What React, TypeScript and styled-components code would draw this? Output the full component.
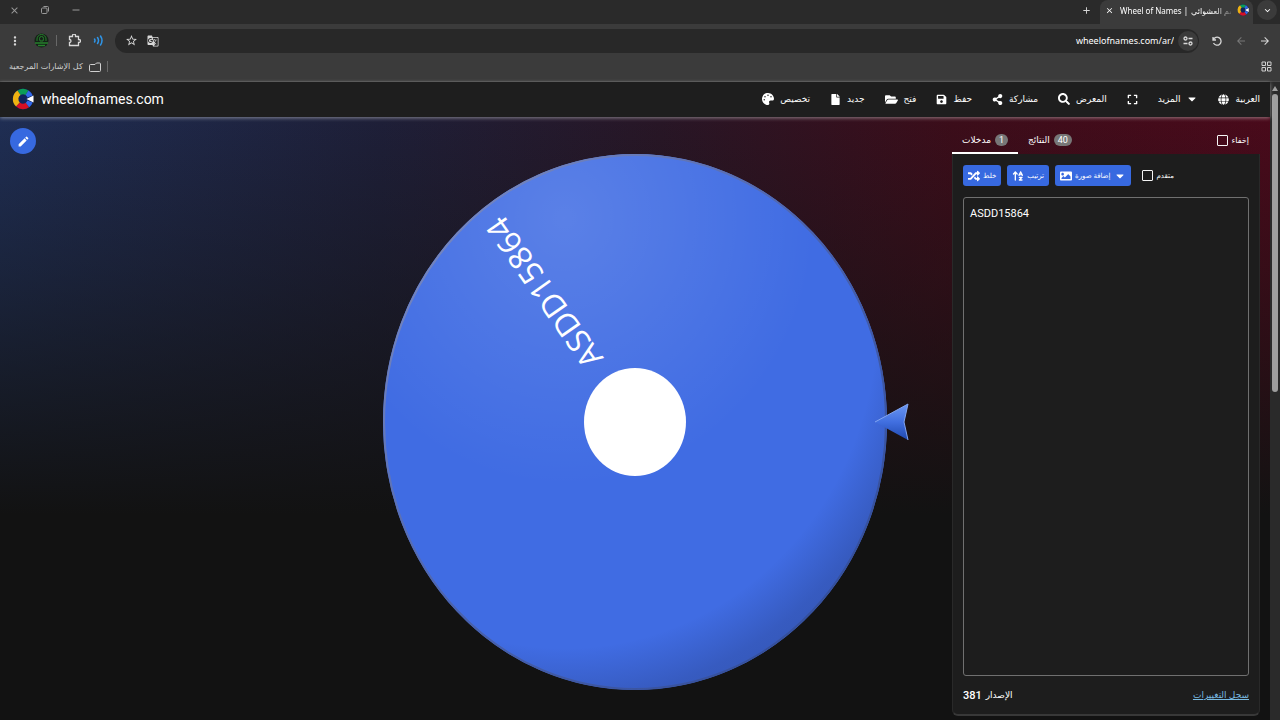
import React from 'react';
import styled, { createGlobalStyle } from 'styled-components';
import {
  FaPalette, FaFile, FaFolderOpen, FaShareAlt, FaSearch, FaSave, FaExpand,
  FaGlobe, FaRandom, FaImage, FaCaretDown,
} from 'react-icons/fa';
import { FaArrowUpAZ } from 'react-icons/fa6';
import {
  MdClose, MdAdd, MdMoreVert, MdStarBorder, MdGTranslate, MdArrowForward,
  MdArrowBack, MdKeyboardArrowDown, MdEdit,
} from 'react-icons/md';

const Global = createGlobalStyle`
  * { box-sizing: border-box; }
  body { margin: 0; background: #121212; color: #fff; font-family: Roboto, "DejaVu Sans", sans-serif; }
  button, input, textarea { font-family: inherit; color: inherit; margin: 0; }
  svg { display: block; flex: none; }
`;

const Window = styled.div`
  min-height: 100vh;
  display: flex;
  flex-direction: column;
`;

const Row = styled.div<{ $gap?: number }>`
  display: flex;
  align-items: center;
  gap: ${p => p.$gap ?? 0}px;
`;

const Spacer = styled.div`
  flex: 1;
`;

const IconButton = styled.button<{ $size?: number; $color?: string; $bg?: string }>`
  display: flex;
  align-items: center;
  justify-content: center;
  flex: none;
  width: ${p => p.$size ?? 20}px;
  height: ${p => p.$size ?? 20}px;
  padding: 0;
  border: 0;
  border-radius: 50%;
  background: ${p => p.$bg ?? 'transparent'};
  color: ${p => p.$color ?? '#d8d8d8'};
`;

const TabStrip = styled.div`
  display: flex;
  align-items: center;
  height: 24px;
  background: #2a2a2a;
  padding: 0 3px 4px 4px;
`;

const WindowButtons = styled(Row)`
  gap: 11px;
`;

const BrowserTab = styled.div`
  display: flex;
  align-items: center;
  align-self: flex-start;
  gap: 6px;
  width: 153px;
  height: 24px;
  margin: 0 4px;
  padding: 0 4px 4px 5px;
  border-radius: 8px 8px 0 0;
  background: #3b3b3b;
  font: 8px "Noto Sans", "DejaVu Sans", sans-serif;
`;

const TabTitle = styled.span`
  flex: 1;
  min-width: 0;
  display: flex;
  gap: 3px;
  align-items: center;
  white-space: nowrap;
  mask-image: linear-gradient(to right, #000 85%, rgba(0, 0, 0, 0.2));
`;

const Toolbar = styled.div`
  display: flex;
  align-items: center;
  gap: 8px;
  height: 33px;
  padding: 0 5px 0 5px;
  background: #3b3b3b;
`;

const AddressBar = styled.div`
  flex: 1;
  display: flex;
  align-items: center;
  gap: 2px;
  height: 24px;
  margin-left: 2px;
  padding: 0 1px 0 6px;
  border-radius: 12px;
  background: #282828;
`;

const AddressInput = styled.input`
  flex: 1;
  min-width: 0;
  border: 0;
  padding: 0 2px;
  outline: 0;
  background: transparent;
  text-align: right;
  font: 9px "Noto Sans", sans-serif;
`;

const Divider = styled.span`
  width: 1px;
  height: 11px;
  background: #686868;
`;

const Bookmarks = styled.div`
  display: flex;
  align-items: center;
  gap: 6px;
  height: 25px;
  padding: 0 8px 5px 9px;
  background: #3b3b3b;
  border-bottom: 1px solid #484848;
  color: #d0d0d0;
  font: 8px "DejaVu Sans", sans-serif;
`;

const Viewport = styled.div`
  flex: 1;
  display: flex;
`;

const Site = styled.div`
  flex: 1;
  min-width: 0;
  display: flex;
  flex-direction: column;
`;

const Header = styled.header`
  display: flex;
  align-items: center;
  height: 35px;
  padding: 0 10px 1px 12px;
  background: #1e1e1e;
  box-shadow: 0 1px 4px rgba(255, 255, 255, 0.45);
  z-index: 1;
`;

const Brand = styled.a`
  display: flex;
  align-items: center;
  gap: 7px;
  color: #fff;
  text-decoration: none;
  font-size: 14px;
`;

const Nav = styled.nav`
  display: flex;
  align-items: center;
  gap: 20px;
`;

const NavButton = styled.button<{ $reverse?: boolean }>`
  display: flex;
  flex-direction: ${p => (p.$reverse ? 'row-reverse' : 'row')};
  align-items: center;
  gap: 6px;
  height: 24px;
  padding: 0;
  border: 0;
  background: transparent;
  font-size: 9px;
  white-space: nowrap;
`;

const Main = styled.main`
  flex: 1;
  display: grid;
  grid-template-columns: minmax(318px, 1fr) minmax(0, 548px) minmax(318px, 1fr);
  background:
    linear-gradient(to bottom, rgba(18, 18, 18, 0) 0%, rgba(18, 18, 18, 0.35) 25%, #121212 66%),
    linear-gradient(to right, #1f2e54 0%, #1e1f38 30%, #281626 52%, #3c0d1a 75%, #4a0a1b 100%);
`;

const EditCell = styled.div`
  padding: 11px 10px;
`;

const EditButton = styled(IconButton)`
  background: #3769e0;
  color: #fff;
`;

const WheelSvg = styled.svg`
  width: 100%;
  height: auto;
  margin-top: 35px;
`;

const Side = styled.section`
  display: flex;
  flex-direction: column;
  justify-self: end;
  width: 308px;
  margin: 10px 10px 4px 0;
`;

const Tabs = styled(Row)`
  height: 27px;
  padding-right: 11px;
`;

const Tab = styled.button<{ $active?: boolean }>`
  display: flex;
  align-items: center;
  gap: 4px;
  height: 27px;
  padding: 0 10px;
  border: 0;
  border-bottom: 2px solid ${p => (p.$active ? '#fff' : 'transparent')};
  background: transparent;
  font-size: 9px;
  white-space: nowrap;
`;

const Badge = styled.span`
  min-width: 12px;
  padding: 0 4px;
  border-radius: 6px;
  background: #777;
  font-size: 9px;
  line-height: 12px;
`;

const Check = styled.label<{ $small?: boolean }>`
  display: flex;
  align-items: center;
  gap: 4px;
  font-size: ${p => (p.$small ? 7 : 8)}px;
  white-space: nowrap;
`;

const Box = styled.input`
  appearance: none;
  width: 11px;
  height: 11px;
  border: 1px solid #f4f4f4;
  border-radius: 1px;
`;

const Card = styled.div`
  flex: 1;
  display: flex;
  flex-direction: column;
  padding: 11px 10px 10px;
  border: 1px solid #292929;
  border-top: 0;
  border-bottom: 2px solid #383838;
  border-radius: 0 0 6px 6px;
  background: #1d1d1d;
`;

const Actions = styled(Row)`
  gap: 6px;
`;

const Action = styled.button`
  display: flex;
  align-items: center;
  gap: 3px;
  height: 21px;
  padding: 0 5px;
  border: 0;
  border-radius: 3px;
  background: #3769e0;
  font-size: 7px;
  white-space: nowrap;
`;

const CheckCell = styled.div`
  margin-left: 5px;
`;

const Entries = styled.textarea`
  flex: 1;
  min-height: 300px;
  width: 100%;
  margin: 11px 0 10px;
  padding: 8px 6px;
  border: 1px solid #707070;
  border-radius: 3px;
  outline: 0;
  resize: none;
  background: #1d1d1d;
  font: 11px/16px Roboto, sans-serif;
`;

const Footer = styled(Row)`
  justify-content: space-between;
  height: 18px;
  font-size: 9px;
`;

const Version = styled.span`
  display: flex;
  align-items: center;
  gap: 4px;
`;

const VersionNumber = styled.b`
  font-size: 11px;
  font-weight: 500;
`;

const ChangeLink = styled.a`
  color: #78b9e0;
`;

const ScrollTrack = styled.div`
  width: 10px;
  display: flex;
  flex-direction: column;
  align-items: center;
  gap: 3px;
  padding-top: 4px;
  background: #2a2a2a;
`;

const ScrollThumb = styled.div`
  width: 6px;
  height: 47%;
  border-radius: 3px;
  background: #9e9e9e;
`;

const Logo = ({ size }: { size: number }) => (
  <svg width={size} height={size} viewBox="0 0 44 44" fill="none">
    <circle cx="22" cy="22" r="21" fill="#10245c" />
    <g strokeWidth="11">
      <path d="M14 9.500A15 15 0 0 1 30 9.500" stroke="#0c9d58" />
      <path d="M30 9.500A15 15 0 0 1 36 17" stroke="#3369e8" />
      <path d="M14 9.500A15 15 0 0 0 12 33" stroke="#eeb211" />
      <path d="M12 33A15 15 0 0 0 31 34" stroke="#d50f25" />
      <path d="M31 34A15 15 0 0 0 36 27" stroke="#3369e8" />
    </g>
    <path d="M43 15V29L29 22Z" fill="#fff" />
  </svg>
);

const Wheel = () => (
  <WheelSvg viewBox="0 0 548 540" role="img" aria-label="ASDD15864">
    <defs>
      <radialGradient id="shine" cx="0.36" cy="0.12" r="0.5">
        <stop offset="0" stopColor="#fff" stopOpacity="0.14" />
        <stop offset="1" stopColor="#fff" stopOpacity="0" />
      </radialGradient>
      <radialGradient id="shade" cx="0.36" cy="0.3" r="0.82">
        <stop offset="0.76" stopColor="#1c2a5c" stopOpacity="0" />
        <stop offset="0.88" stopColor="#1c2a5c" stopOpacity="0.26" />
        <stop offset="1" stopColor="#1c2a5c" stopOpacity="0.36" />
      </radialGradient>
      <linearGradient id="rim" x1="0" y1="0" x2="1" y2="1">
        <stop offset="0" stopColor="#8492c4" />
        <stop offset="0.5" stopColor="#4a62ac" />
        <stop offset="1" stopColor="#2c4896" />
      </linearGradient>
      <linearGradient id="arrow" x1="0" y1="0" x2="0" y2="1">
        <stop offset="0" stopColor="#6c97f2" />
        <stop offset="0.5" stopColor="#416fe0" />
        <stop offset="1" stopColor="#1f48ae" />
      </linearGradient>
    </defs>
    <ellipse cx="274" cy="270" rx="252" ry="268" fill="#406ce3" />
    <ellipse cx="274" cy="270" rx="252" ry="268" fill="url(#shine)" />
    <ellipse cx="274" cy="270" rx="251" ry="267" fill="url(#shade)" stroke="url(#rim)" strokeWidth="2" />
    <text
      transform="translate(243 206) rotate(-125)"
      fill="#fff"
      fontFamily="Open Sans, Noto Sans, sans-serif"
      fontSize="32"
      fontWeight="400"
    >
      ASDD15864
    </text>
    <ellipse cx="274" cy="270" rx="51" ry="54" fill="#fff" />
    <path d="M514 270L547 252L543 270L547 288Z" fill="url(#arrow)" />
    <path d="M514 270L547 252L543 270L547 288" fill="none" stroke="#82a5f2" strokeWidth="1" />
  </WheelSvg>
);

const navItems = [
  { icon: <FaPalette size={12} />, text: 'تخصيص' },
  { icon: <FaFile size={11} />, text: 'جديد' },
  { icon: <FaFolderOpen size={13} />, text: 'فتح' },
  { icon: <FaSave size={11} />, text: 'حفظ' },
  { icon: <FaShareAlt size={11} />, text: 'مشاركة' },
  { icon: <FaSearch size={12} />, text: 'المعرض' },
];

export default function App() {
  return (
    <Window>
      <Global />
      <TabStrip>
        <WindowButtons>
          <IconButton aria-label="إغلاق" $color="#999"><MdClose size={11} /></IconButton>
          <IconButton aria-label="استعادة" $color="#999">
            <svg width="8" height="8" viewBox="0 0 8 8" fill="none" stroke="currentColor">
              <rect x="0.500" y="2" width="5.500" height="5.500" rx="1" />
              <path d="M2.500 0.500H6.500Q7.500 0.500 7.500 1.500V5.500" />
            </svg>
          </IconButton>
          <IconButton aria-label="تصغير" $color="#999">
            <svg width="8" height="8" viewBox="0 0 8 8" stroke="currentColor"><path d="M0.500 4H7.500" /></svg>
          </IconButton>
        </WindowButtons>
        <Spacer />
        <IconButton aria-label="علامة تبويب جديدة"><MdAdd size={11} /></IconButton>
        <BrowserTab>
          <MdClose size={9} />
          <TabTitle>Wheel of Names | <bdi>سم العشوائي</bdi></TabTitle>
          <Logo size={12} />
        </BrowserTab>
        <IconButton $bg="#3b3b3b" $color="#fff" aria-label="بحث"><MdKeyboardArrowDown size={11} /></IconButton>
      </TabStrip>

      <Toolbar>
        <IconButton aria-label="القائمة"><MdMoreVert size={14} /></IconButton>
        <Row $gap={7}>
          <IconButton aria-label="الملف الشخصي" $size={16}>
            <svg width="15" height="15" viewBox="0 0 15 15">
              <circle cx="7.500" cy="7.500" r="7" fill="#142117" />
              <g fill="none" stroke="#26802c">
                <path d="M3 8V6A4.500 4.500 0 0 1 12 6V8" />
                <path d="M5.500 5.500A2 2 0 0 1 9.500 5.500L9 8H6Z" />
                <path d="M1 10H14M4 12.500H11" strokeWidth="1.500" />
              </g>
            </svg>
          </IconButton>
          <Divider />
        </Row>
        <IconButton aria-label="الإضافات" $size={18}>
          <svg width="13" height="13" viewBox="0 0 13 13" fill="none" stroke="currentColor" strokeWidth="1.300">
            <path d="M1.500 2.500H4.500V1.500A1 1 0 0 1 7.500 1.500V2.500H10.500V5.500H11A1 1 0 0 1 11 8.500H10.500V11.500H1.500V8.500A1.500 1.500 0 0 0 1.500 5.500Z" />
          </svg>
        </IconButton>
        <IconButton aria-label="الصوت" $size={14} $color="#2f95e8">
          <svg width="11" height="11" viewBox="0 0 11 11" fill="none" stroke="currentColor" strokeWidth="1.500" strokeLinecap="round">
            <path d="M1.500 4Q2.500 5.500 1.500 7M4.500 2.500Q6.500 5.500 4.500 8.500M7.500 1Q10.500 5.500 7.500 10" />
          </svg>
        </IconButton>
        <AddressBar>
          <IconButton aria-label="إشارة مرجعية"><MdStarBorder size={13} /></IconButton>
          <IconButton aria-label="ترجمة"><MdGTranslate size={12} /></IconButton>
          <AddressInput aria-label="العنوان" defaultValue="wheelofnames.com/ar/" />
          <IconButton aria-label="معلومات الموقع" $bg="#3b3b3b">
            <svg width="10" height="10" viewBox="0 0 10 10" fill="none" stroke="currentColor" strokeWidth="1.300">
              <circle cx="2.500" cy="2.500" r="1.500" /><path d="M5.500 2.500H9.500M0.500 7.500H4.500" /><circle cx="7.500" cy="7.500" r="1.500" />
            </svg>
          </IconButton>
        </AddressBar>
        <Row $gap={4}>
          <IconButton aria-label="إعادة تحميل">
            <svg width="10" height="10" viewBox="0 0 10 10" fill="none" stroke="currentColor" strokeWidth="1.300">
              <path d="M1 1V4H4M1.300 3.800A4 4 0 1 1 1.500 7" />
            </svg>
          </IconButton>
          <IconButton aria-label="التالي" $color="#777"><MdArrowBack size={12} /></IconButton>
          <IconButton aria-label="السابق"><MdArrowForward size={12} /></IconButton>
        </Row>
      </Toolbar>

      <Bookmarks>
        <bdi>كل الإشارات المرجعية</bdi>
        <svg width="12" height="10" viewBox="0 0 12 10" fill="none" stroke="currentColor">
          <path d="M1.500 2.500H6L7.500 1H10.500Q11.500 1 11.500 2V8.500Q11.500 9.500 10.500 9.500H1.500Q0.500 9.500 0.500 8.500V3.500Q0.500 2.500 1.500 2.500Z" />
        </svg>
        <Divider />
        <Spacer />
        <svg width="11" height="11" viewBox="0 0 11 11" fill="none" stroke="currentColor">
          <path d="M1 1H4.500V4.500H1ZM6.500 1H10V4.500H6.500ZM1 6.500H4.500V10H1ZM6.500 6.500H10V10H6.500Z" />
        </svg>
      </Bookmarks>

      <Viewport>
        <Site>
          <Header>
            <Brand href="#"><Logo size={22} />wheelofnames.com</Brand>
            <Spacer />
            <Nav>
              {navItems.map(item => (
                <NavButton key={item.text}>{item.icon}<bdi>{item.text}</bdi></NavButton>
              ))}
              <NavButton aria-label="ملء الشاشة"><FaExpand size={11} /></NavButton>
              <NavButton $reverse><FaCaretDown size={12} /><bdi>المزيد</bdi></NavButton>
              <NavButton><FaGlobe size={11} /><bdi>العربية</bdi></NavButton>
            </Nav>
          </Header>
          <Main>
            <EditCell>
              <EditButton aria-label="تعديل" $size={26}><MdEdit size={13} /></EditButton>
            </EditCell>
            <Wheel />
            <Side>
              <Tabs>
                <Tab $active><bdi>مدخلات</bdi><Badge>1</Badge></Tab>
                <Tab><bdi>النتائج</bdi><Badge>40</Badge></Tab>
                <Spacer />
                <Check><Box type="checkbox" /><bdi>إخفاء</bdi></Check>
              </Tabs>
              <Card>
                <Actions>
                  <Action><FaRandom size={12} /><bdi>خلط</bdi></Action>
                  <Action><FaArrowUpAZ size={12} /><bdi>ترتيب</bdi></Action>
                  <Action><FaImage size={12} /><bdi>إضافة صورة</bdi><FaCaretDown size={12} /></Action>
                  <CheckCell><Check $small><Box type="checkbox" /><bdi>متقدم</bdi></Check></CheckCell>
                </Actions>
                <Entries aria-label="مدخلات" defaultValue="ASDD15864" spellCheck={false} />
                <Footer>
                  <Version><VersionNumber>381</VersionNumber><bdi>الإصدار</bdi></Version>
                  <ChangeLink href="#"><bdi>سجل التغييرات</bdi></ChangeLink>
                </Footer>
              </Card>
            </Side>
          </Main>
        </Site>
        <ScrollTrack>
          <svg width="6" height="5" viewBox="0 0 6 5"><path d="M3 0L6 5H0Z" fill="#9e9e9e" /></svg>
          <ScrollThumb />
        </ScrollTrack>
      </Viewport>
    </Window>
  );
}
